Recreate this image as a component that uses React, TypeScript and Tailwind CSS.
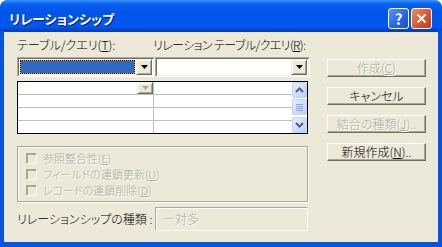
import React from 'react'

function DropArrow({ disabled }: { disabled?: boolean }) {
  return (
    <svg width="7" height="4" viewBox="0 0 7 4">
      <path d="M0 0h7L3.5 4z" fill={disabled ? '#aca899' : '#000'} />
    </svg>
  )
}

function DropBtn({ small, disabled }: { small?: boolean; disabled?: boolean }) {
  return (
    <div
      className={`flex w-[16px] items-center justify-center border border-t-[#f1efe2] border-l-[#f1efe2] border-b-[#716f64] border-r-[#716f64] bg-[#ece9d8] shadow-[inset_1px_1px_0_#fff,inset_-1px_-1px_0_#aca899] ${small ? 'h-[12px]' : 'h-[16px]'}`}
    >
      <DropArrow disabled={disabled} />
    </div>
  )
}

function Combo({ selected, width }: { selected?: boolean; width: string }) {
  return (
    <div className={`flex h-[20px] border border-t-[#aca899] border-l-[#aca899] border-b-white border-r-white ${width}`}>
      <div className="flex flex-1 items-center border border-t-[#716f64] border-l-[#716f64] border-b-[#f1efe2] border-r-[#f1efe2] bg-white pl-[1px] pr-[1px]">
        <div className="mr-[1px] flex h-[14px] flex-1">
          {selected && (
            <div className="flex flex-1 border border-dotted border-black bg-[#e8a838]">
              <div className="flex-1 bg-[#316ac5]" />
            </div>
          )}
        </div>
        <DropBtn />
      </div>
    </div>
  )
}

function Chevron({ up }: { up?: boolean }) {
  return (
    <svg width="9" height="6" viewBox="0 0 9 6">
      <path
        d={up ? 'M1 5L4.5 1.5L8 5' : 'M1 1L4.5 4.5L8 1'}
        stroke="#4d6185"
        strokeWidth="2"
        fill="none"
      />
    </svg>
  )
}

function ScrollBar() {
  return (
    <div className="flex w-[15px] flex-col bg-[#fdfdfa]">
      <div className="flex h-[16px] items-center justify-center rounded-[2px] border border-[#c3d3fd] bg-[linear-gradient(135deg,#e6eefc,#bccffa)]">
        <Chevron up />
      </div>
      <div className="mt-[1px] flex h-[16px] flex-col items-center justify-center gap-[1px] rounded-[2px] border border-[#c3d3fd] bg-[linear-gradient(135deg,#e6eefc,#bccffa)]">
        <div className="h-[1px] w-[7px] bg-[#8aa6e6]" />
        <div className="h-[1px] w-[7px] bg-[#8aa6e6]" />
        <div className="h-[1px] w-[7px] bg-[#8aa6e6]" />
        <div className="h-[1px] w-[7px] bg-[#8aa6e6]" />
      </div>
      <div className="flex-1" />
      <div className="flex h-[16px] items-center justify-center rounded-[2px] border border-[#c3d3fd] bg-[linear-gradient(135deg,#e6eefc,#bccffa)]">
        <Chevron />
      </div>
    </div>
  )
}

function Grid() {
  const rows = [0, 1, 2, 3]
  return (
    <div className="mt-[4px] flex h-[53px] w-[291px] border border-black bg-white">
      <div className="flex flex-1 flex-col">
        {rows.map((r) => (
          <div
            key={r}
            className={`flex ${r < 3 ? 'h-[13px] border-b border-[#c0c0c0]' : 'flex-1'}`}
          >
            <div className="flex w-[136px] justify-end border-r border-[#c0c0c0]">
              {r === 0 && <DropBtn small disabled />}
            </div>
            <div className="flex-1" />
          </div>
        ))}
      </div>
      <ScrollBar />
    </div>
  )
}

function CheckRow({ children }: { children: React.ReactNode }) {
  return (
    <div className="flex h-[16px] items-center">
      <div className="h-[11px] w-[11px] border border-t-[#aca899] border-l-[#aca899] border-b-white border-r-white shadow-[inset_1px_1px_0_#aca899]" />
      <span className="ml-[6px] whitespace-nowrap text-[11px] leading-[13px] text-[#aca899] [text-shadow:1px_1px_0_#fff]">
        {children}
      </span>
    </div>
  )
}

function Button({ children, disabled }: { children: React.ReactNode; disabled?: boolean }) {
  return (
    <div className="flex h-[18px] items-center justify-center border border-t-white border-l-white border-b-[#716f64] border-r-[#716f64] bg-[#ece9d8] shadow-[inset_-1px_-1px_0_#aca899]">
      <span
        className={`whitespace-nowrap ${disabled ? 'text-[#aca899] [text-shadow:1px_1px_0_#fff]' : 'text-black'}`}
      >
        {children}
      </span>
    </div>
  )
}

export default function App() {
  return (
    <div className="h-[247px] w-[442px] overflow-hidden bg-white">
      <div className="flex h-[247px] w-[442px] flex-col rounded-t-[8px] bg-[#0854e0] font-['Noto_Sans_CJK_JP','Noto_Sans',sans-serif] text-[12px] font-light leading-[14px] text-black [font-feature-settings:'palt']">
        {/* Title bar */}
        <div className="flex h-[31px] rounded-t-[8px] bg-[linear-gradient(180deg,#3d95ff_0%,#0a62f0_12%,#0053e8_40%,#0058ee_85%,#0049d8_95%,#003dc4_100%)] pl-[9px] pr-[10px]">
          <div className="flex flex-1 items-center pt-[7px] text-[13px] font-bold text-white [text-shadow:1px_1px_0_#0a1a80]">
            リレーションシップ
          </div>
          <div className="mt-[8px] flex gap-[2px]">
            <div className="flex h-[21px] w-[21px] items-center justify-center rounded-[3px] border border-white bg-[linear-gradient(135deg,#5a94ff,#2760e8_60%,#1a4fd0)] text-[15px] font-bold leading-none text-white">
              ?
            </div>
            <div className="flex h-[21px] w-[21px] items-center justify-center rounded-[3px] border border-white bg-[linear-gradient(135deg,#f08a64,#dd5530_55%,#c03c18)]">
              <svg width="11" height="11" viewBox="0 0 11 11">
                <path d="M1.5 1.5l8 8M9.5 1.5l-8 8" stroke="#fff" strokeWidth="2" />
              </svg>
            </div>
          </div>
        </div>

        {/* Client area */}
        <div className="mx-[4px] mb-[5px] flex flex-1 border-t border-[#0a3fb8] bg-[#ece9d8]">
          <div className="ml-[13px] flex w-[293px] flex-col pt-[6px]">
            <div className="flex h-[14px] whitespace-nowrap">
              <div className="w-[136px]">
                テーブル/クエリ(<u>T</u>):
              </div>
              <div className="tracking-[-0.6px]">
                リレーション テーブル/クエリ(<u>R</u>):
              </div>
            </div>
            <div className="mt-[5px] flex">
              <Combo selected width="w-[138px]" />
              <Combo width="w-[155px]" />
            </div>
            <Grid />
            <div className="mt-[12px] flex h-[56px] w-[291px] flex-col border border-[#aca899] pl-[8px] pt-[3px] shadow-[inset_1px_1px_0_#fff,1px_1px_0_#fff]">
              <CheckRow>
                参照整合性(<u>E</u>)
              </CheckRow>
              <CheckRow>
                フィールドの連鎖更新(<u>U</u>)
              </CheckRow>
              <CheckRow>
                レコードの連鎖削除(<u>D</u>)
              </CheckRow>
            </div>
            <div className="mt-[5px] flex h-[24px] items-center">
              <div className="w-[138px] whitespace-nowrap">リレーションシップの種類 :</div>
              <div className="flex h-[24px] w-[153px] items-center border border-t-[#aca899] border-l-[#aca899] border-b-white border-r-white pl-[7px] shadow-[inset_1px_1px_0_#fff]">
                <span className="text-[#aca899] [text-shadow:1px_1px_0_#fff]">一対多</span>
              </div>
            </div>
          </div>

          <div className="ml-[17px] flex w-[99px] flex-col gap-[10px] pt-[27px]">
            <Button disabled>
              作成(<u>C</u>)
            </Button>
            <Button>キャンセル</Button>
            <Button disabled>
              結合の種類(<u>J</u>)..
            </Button>
            <Button>
              新規作成(<u>N</u>)..
            </Button>
          </div>
        </div>
      </div>
    </div>
  )
}
